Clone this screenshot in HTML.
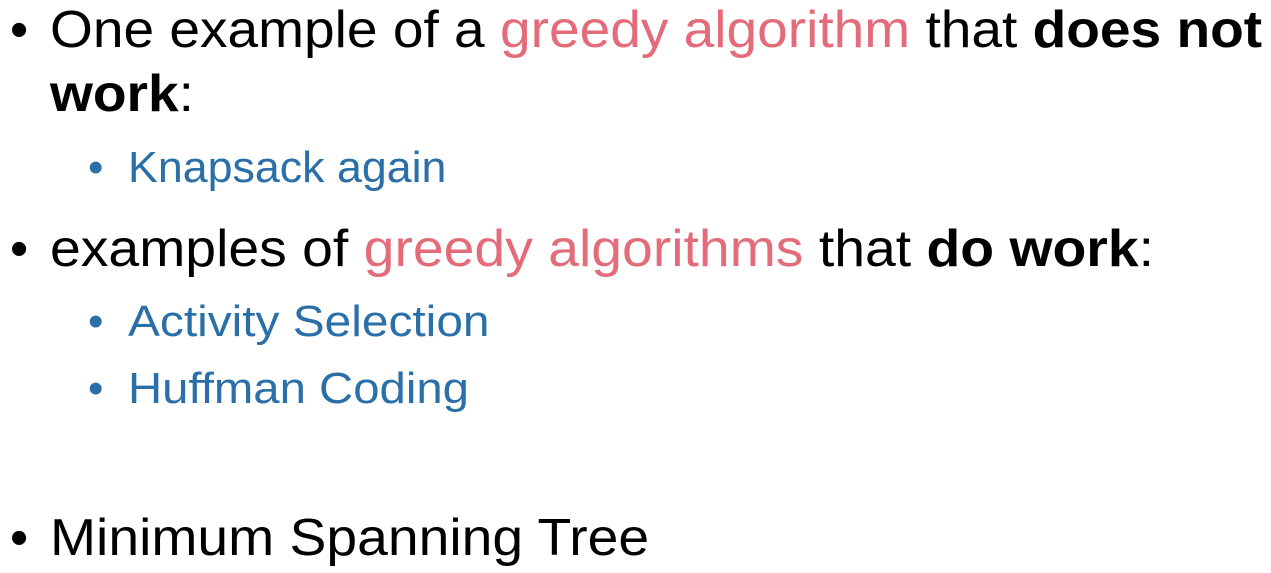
<!DOCTYPE html>
<html><head><meta charset="utf-8"><style>
body{margin:0;width:1271px;height:573px;background:#fff;overflow:hidden;position:relative;font-family:"Liberation Sans",sans-serif}
.l{position:absolute;white-space:nowrap;line-height:1;transform-origin:0 0}
.m{font-size:52px;color:#000}
.s{font-size:44px;color:#2a6fa8}
.p{color:#e46c7a}
.b{position:absolute;line-height:1}
</style></head><body>
<div class="b m" style="left:10px;top:4px">•</div>
<div class="l m" style="left:50px;top:4px;transform:scaleX(1.059)">One example of a <span class="p">greedy algorithm</span> that <b>does not</b></div>
<div class="l m" style="left:50px;top:68px;transform:scaleX(1.06)"><b>work</b>:</div>
<div class="b s" style="left:88px;top:146px;color:#2a6fa8">•</div>
<div class="l s" style="left:128px;top:146px;transform:scaleX(1.017)">Knapsack again</div>
<div class="b m" style="left:10px;top:223px">•</div>
<div class="l m" style="left:50px;top:223px;transform:scaleX(1.064)">examples of <span class="p">greedy algorithms</span> that <b>do work</b>:</div>
<div class="b s" style="left:88px;top:300px">•</div>
<div class="l s" style="left:128px;top:300px;transform:scaleX(1.087)">Activity Selection</div>
<div class="b s" style="left:88px;top:367px">•</div>
<div class="l s" style="left:128px;top:367px;transform:scaleX(1.075)">Huffman Coding</div>
<div class="b m" style="left:10px;top:512px">•</div>
<div class="l m" style="left:50px;top:512px;transform:scaleX(1.063)">Minimum Spanning Tree</div>
</body></html>
